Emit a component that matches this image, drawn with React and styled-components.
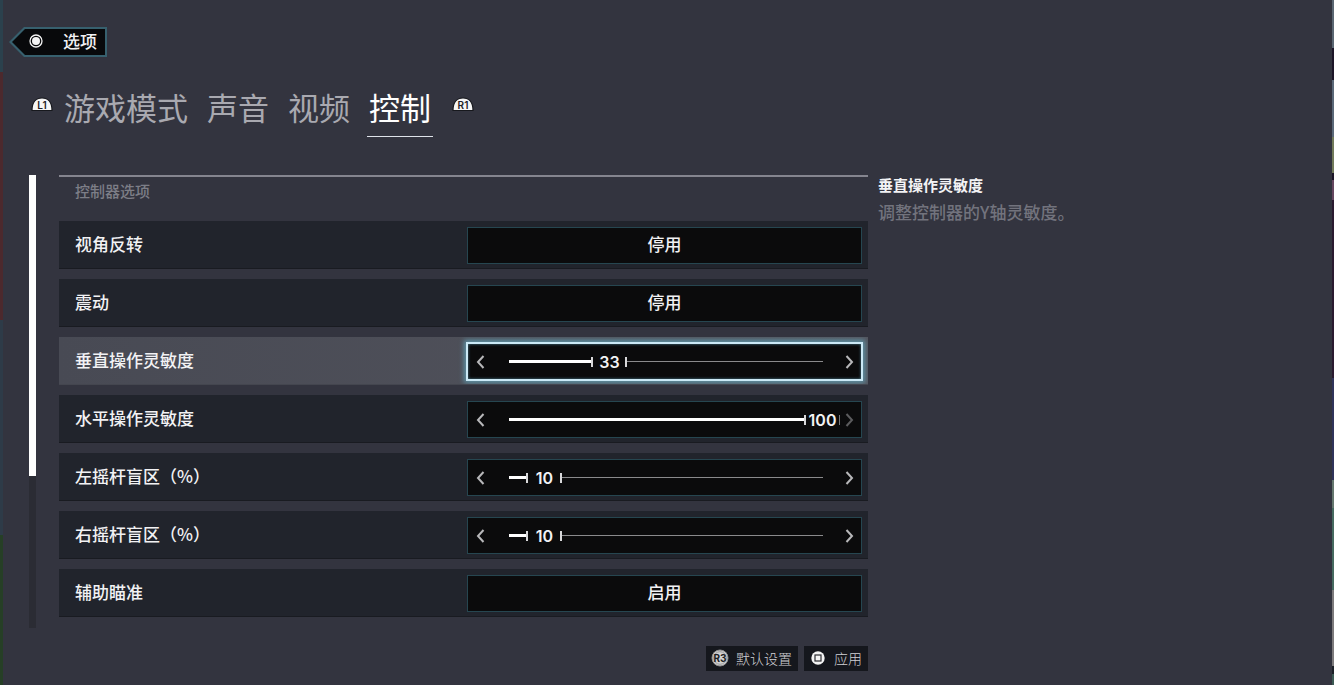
import { useState } from "react";
import styled, { createGlobalStyle } from "styled-components";

const GlobalStyle = createGlobalStyle`
  * {
    box-sizing: border-box;
  }
  body {
    margin: 0;
    background-color: #33343f;
    font-family: "Noto Sans CJK SC", sans-serif;
  }
  button {
    margin: 0;
    padding: 0;
    border: 0;
    background: none;
    color: inherit;
    font-family: inherit;
    cursor: pointer;
  }
`;

// page

const Page = styled.div`
  min-height: 100vh;
  padding: 27px 29px 14px;
  color: #f2f2f4;
  background:
    linear-gradient(
        #2b414d 0 72px,
        #4c292d 72px 320px,
        #2e3b48 320px 535px,
        #263f26 535px
      )
      left top / 3px 100% no-repeat,
    linear-gradient(
        #5a6672 0 48px,
        #1c1528 48px 80px,
        #5a6878 80px 137px,
        #717a5a 137px 173px,
        #1c1528 173px 180px,
        #64465f 180px 200px,
        #2a1a30 200px 378px,
        #30345a 378px 480px,
        #64766e 480px 508px,
        #466a60 508px 590px,
        #7c7a7c 590px 666px,
        #1c2028 666px 674px,
        #3c5a54 674px
      )
      right top / 2px 100% no-repeat,
    #33343f;
`;

// header

const BackButton = styled.button`
  display: flex;
  height: 30px;
  margin-left: -20px;
  padding: 2px 2px 2px 3px;
  background-color: #37606e;
  clip-path: polygon(15px 0, 100% 0, 100% 100%, 15px 100%, 0 50%);
`;
const BackInner = styled.span`
  display: flex;
  align-items: center;
  column-gap: 20px;
  height: 26px;
  padding: 0 8px 2px 17px;
  background-color: #08090b;
  clip-path: polygon(13px 0, 100% 0, 100% 100%, 13px 100%, 0 50%);
  font-size: 17px;
  font-weight: 500;
  line-height: 24px;
`;
const TabBar = styled.nav`
  display: flex;
  align-items: flex-start;
  margin-top: 30px;
  padding-left: 2px;
`;
const BumperButton = styled.button`
  display: flex;
  margin-top: 10px;
`;
const Tabs = styled.div`
  display: flex;
  column-gap: 15px;
  margin: 0 19px 0 9px;
`;
const Tab = styled.button`
  height: 50px;
  padding: 0 2px 9px;
  border-bottom: 1px solid ${(props) => (props.$active ? "#dfe3ea" : "transparent")};
  color: ${(props) => (props.$active ? "#ffffff" : "#a9a9b0")};
  font-size: 31px;
  font-weight: 400;
  line-height: 40px;
`;

// content

const Content = styled.main`
  display: grid;
  grid-template-columns: 7px minmax(0, 71fr) minmax(0, 36fr);
  margin-top: 38px;
`;
const ScrollTrack = styled.div`
  background-color: #2b2c34;
`;
const ScrollThumb = styled.div`
  height: 66.5%;
  background-color: #ffffff;
`;
const Settings = styled.section`
  display: flex;
  flex-direction: column;
  row-gap: 10px;
  margin: 0 10px 11px 23px;
  border-top: 2px solid #85858f;
`;
const GroupTitle = styled.h2`
  height: 34px;
  margin: 0;
  padding-left: 16px;
  color: #7d7e87;
  font-size: 15px;
  font-weight: 500;
  line-height: 28px;
`;
const Row = styled.div`
  display: grid;
  grid-template-columns: 1fr 1fr;
  align-items: center;
  height: 48px;
  padding: 2px 6px 0 13px;
  overflow: hidden;
  border-bottom: 1px solid ${(props) => (props.$focused ? "#44464f" : "#191b21")};
  background: ${(props) =>
    props.$focused ? "linear-gradient(90deg, #484a54, #53545d)" : "#21242c"};
`;
const Label = styled.label`
  padding: 0 0 4px 3px;
  font-size: 17px;
  font-weight: 500;
  line-height: 24px;
`;
const ToggleButton = styled.button`
  height: 37px;
  padding-bottom: 3px;
  border: 1px solid #264650;
  background-color: #0b0b0c;
  font-size: 17px;
  font-weight: 500;
  line-height: 24px;
`;

// slider

const SliderBox = styled.div`
  display: flex;
  align-items: center;
  height: ${(props) => (props.$focused ? "39px" : "37px")};
  margin: 0 ${(props) => (props.$focused ? "-1px" : "0")};
  padding: 0 7px 0 8px;
  border: ${(props) => (props.$focused ? "2px solid #cbe9f6" : "1px solid #264650")};
  background-color: #0b0b0c;
  box-shadow: ${(props) =>
    props.$focused ? "0 0 5px 2px #5f95a8, inset 0 0 3px #4a7e90" : "none"};
`;
const ArrowButton = styled.button`
  display: flex;
  color: #b8b8ba;

  &:disabled {
    color: #5c5c5e;
    cursor: default;
  }
`;
const Track = styled.div`
  position: relative;
  display: flex;
  flex: 1;
  align-items: center;
  min-width: 0;
  height: 100%;
  margin: 0 5px 0 24px;
`;
const Filled = styled.div`
  flex: none;
  height: 3px;
  background-color: #ffffff;
`;
const Value = styled.output`
  flex: none;
  width: 36px;
  height: 10px;
  border: solid #d8d8da;
  border-width: 0 ${(props) => (props.$full ? "1px" : "2px")} 0 2px;
  border-right-color: ${(props) => (props.$full ? "#77777a" : "#d8d8da")};
  font-family: Inter, "Noto Sans CJK SC", sans-serif;
  font-size: 16px;
  font-weight: 600;
  line-height: 10px;
  text-align: center;
`;
const Rest = styled.div`
  flex: 1;
  height: 1px;
  margin-right: 17px;
  background-color: #8a8a8c;
`;
const RangeInput = styled.input`
  position: absolute;
  inset: 0;
  width: 100%;
  height: 100%;
  margin: 0;
  opacity: 0;
  cursor: pointer;
`;

// description

const Description = styled.aside`
  min-width: 0;
`;
const DescriptionTitle = styled.h3`
  margin: 0;
  font-size: 15px;
  font-weight: 700;
  line-height: 20px;
`;
const DescriptionText = styled.p`
  margin: 4px 0 0;
  color: #72737d;
  font-size: 17px;
  font-weight: 500;
  line-height: 26px;
`;

// footer

const Footer = styled.footer`
  display: flex;
  grid-column: 2;
  justify-content: flex-end;
  column-gap: 6px;
  margin: 18px 10px 0 0;
`;
const FooterButton = styled.button`
  display: flex;
  align-items: center;
  column-gap: 7px;
  height: 25px;
  padding: 0 6px 1px 5px;
  background-color: #15171d;
  color: #d0d0d4;
  font-size: 14px;
  font-weight: 300;
  line-height: 24px;
`;

function CircleIcon() {
  return (
    <svg width="14" height="14" viewBox="0 0 14 14" aria-hidden="true">
      <circle cx="7" cy="7" r="6" fill="none" stroke="#f4f4f4" strokeWidth="1.3" />
      <circle cx="7" cy="7" r="4" fill="#f4f4f4" />
    </svg>
  );
}

function BumperIcon({ text }) {
  return (
    <svg width="22" height="15" viewBox="0 0 22 15" aria-hidden="true">
      <path
        d="M1 13.5C1 5.5 5 1 11 1s10 4.5 10 12.5z"
        fill="#f6f6f6"
        stroke="#17181d"
        strokeWidth="1.2"
      />
      <text
        x="11"
        y="11.5"
        textAnchor="middle"
        fontFamily="Inter, sans-serif"
        fontSize="10"
        fontWeight="600"
        fill="#222327"
      >
        {text}
      </text>
    </svg>
  );
}

function StickIcon() {
  return (
    <svg width="18" height="18" viewBox="0 0 18 18" aria-hidden="true">
      <circle cx="9" cy="9" r="8" fill="#d2d2d2" stroke="#8e8e90" strokeWidth="1" />
      <circle cx="9" cy="9" r="6.3" fill="none" stroke="#8a8a8c" strokeWidth="0.8" />
      <text
        x="9"
        y="12.5"
        textAnchor="middle"
        fontFamily="Inter, sans-serif"
        fontSize="10"
        fontWeight="700"
        fill="#1c1d22"
      >
        R3
      </text>
    </svg>
  );
}

function SquareIcon() {
  return (
    <svg width="18" height="14" viewBox="0 0 18 14" aria-hidden="true">
      <circle cx="9" cy="7" r="6.7" fill="#f4f4f4" />
      <rect x="6" y="4" width="6" height="6" fill="none" stroke="#2a2b30" strokeWidth="1.2" />
    </svg>
  );
}

function Chevron({ right }) {
  return (
    <svg width="9" height="14" viewBox="0 0 9 14" aria-hidden="true">
      <path
        d={right ? "M1.5 1L7 7l-5.500 6" : "M7.5 1L2 7l5.500 6"}
        fill="none"
        stroke="currentColor"
        strokeWidth="2"
      />
    </svg>
  );
}

function Slider({ id, label, value, min, max, focused, onChange }) {
  const ratio = (value - min) / (max - min);
  return (
    <SliderBox $focused={focused}>
      <ArrowButton
        aria-label={`${label} -`}
        disabled={value <= min}
        onClick={() => onChange(value - 1)}
      >
        <Chevron />
      </ArrowButton>
      <Track>
        <Filled style={{ width: `calc((100% - 36px) * ${ratio})` }} />
        <Value htmlFor={id} $full={value >= max}>
          {value}
        </Value>
        <Rest />
        <RangeInput
          type="range"
          id={id}
          min={min}
          max={max}
          value={value}
          onChange={(e) => onChange(Number(e.target.value))}
        />
      </Track>
      <ArrowButton
        aria-label={`${label} +`}
        disabled={value >= max}
        onClick={() => onChange(value + 1)}
      >
        <Chevron right />
      </ArrowButton>
    </SliderBox>
  );
}

const tabs = ["游戏模式", "声音", "视频", "控制"];

const settings = [
  { id: "invert", label: "视角反转", value: false },
  { id: "vibration", label: "震动", value: false },
  { id: "vertical", label: "垂直操作灵敏度", value: 33, min: 7, max: 100 },
  { id: "horizontal", label: "水平操作灵敏度", value: 100, min: 7, max: 100 },
  { id: "leftZone", label: "左摇杆盲区（%）", value: 10, min: 5, max: 90 },
  { id: "rightZone", label: "右摇杆盲区（%）", value: 10, min: 5, max: 90 },
  { id: "aimAssist", label: "辅助瞄准", value: true },
];

const defaults = Object.fromEntries(settings.map((s) => [s.id, s.value]));

function App() {
  const [tab, setTab] = useState("控制");
  const [values, setValues] = useState(defaults);
  const focused = "vertical";

  const update = (id, value) => setValues({ ...values, [id]: value });

  return (
    <Page>
      <GlobalStyle />
      <BackButton>
        <BackInner>
          <CircleIcon />
          选项
        </BackInner>
      </BackButton>
      <TabBar>
        <BumperButton aria-label="L1">
          <BumperIcon text="L1" />
        </BumperButton>
        <Tabs>
          {tabs.map((name) => (
            <Tab key={name} $active={name === tab} onClick={() => setTab(name)}>
              {name}
            </Tab>
          ))}
        </Tabs>
        <BumperButton aria-label="R1">
          <BumperIcon text="R1" />
        </BumperButton>
      </TabBar>
      <Content>
        <ScrollTrack>
          <ScrollThumb />
        </ScrollTrack>
        <Settings>
          <GroupTitle>控制器选项</GroupTitle>
          {settings.map((s) => (
            <Row key={s.id} $focused={s.id === focused}>
              <Label htmlFor={s.id}>{s.label}</Label>
              {typeof s.value === "boolean" ? (
                <ToggleButton id={s.id} onClick={() => update(s.id, !values[s.id])}>
                  {values[s.id] ? "启用" : "停用"}
                </ToggleButton>
              ) : (
                <Slider
                  {...s}
                  value={values[s.id]}
                  focused={s.id === focused}
                  onChange={(value) => update(s.id, value)}
                />
              )}
            </Row>
          ))}
        </Settings>
        <Description>
          <DescriptionTitle>垂直操作灵敏度</DescriptionTitle>
          <DescriptionText>调整控制器的Y轴灵敏度。</DescriptionText>
        </Description>
        <Footer>
          <FooterButton onClick={() => setValues(defaults)}>
            <StickIcon />
            默认设置
          </FooterButton>
          <FooterButton>
            <SquareIcon />
            应用
          </FooterButton>
        </Footer>
      </Content>
    </Page>
  );
}

export default App;
